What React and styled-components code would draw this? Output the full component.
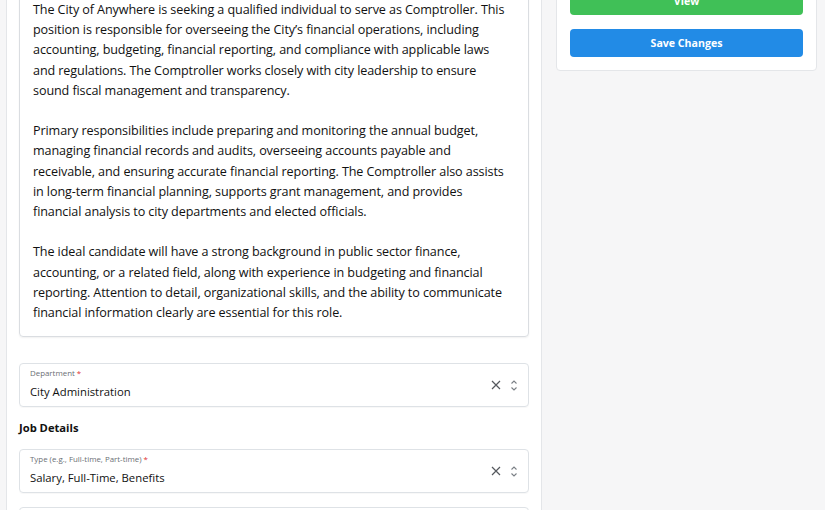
import React from 'react';
import styled, { createGlobalStyle } from 'styled-components';

// --- GLOBAL ---
const GlobalStyle = createGlobalStyle`
  html, body { margin: 0; padding: 0; background: #f6f6f7; overflow: hidden; }
  body { font-family: "Open Sans", "Noto Sans", Arial, sans-serif; color: #111; }
`;

// --- LAYOUT ---
const Page = styled.div`
  display: flex; align-items: flex-start; gap: 14px;
  padding: 0 6px;
  margin-top: -29px; /* page is scrolled down */
`;
const MainCard = styled.section`
  width: 536px; box-sizing: border-box;
  background: #fff; border: 1px solid #e4e6e9; border-radius: 4px;
  padding: 13px 12px 40px; display: flex; flex-direction: column;
`;
const SideCard = styled.aside`
  width: 261px; box-sizing: border-box;
  background: #fff; border: 1px solid #e4e6e9; border-radius: 4px;
  padding: 15px 13px 13px; display: flex; flex-direction: column; gap: 14px;
`;

// --- DESCRIPTION ---
const TextBox = styled.div`
  border: 1px solid #dadde1; border-radius: 4px;
  padding: 14px 13px 13px;
  box-shadow: 0 1px 2px rgba(0,0,0,0.06);
  font-size: 12.6px; letter-spacing: -0.1px; line-height: 20.2px; color: #111;
  white-space: pre;
`;

// --- SELECT FIELD ---
const Field = styled.div`
  height: 44px; box-sizing: border-box; margin-top: ${p => p.$gap || 0}px;
  border: 1px solid #dee2e6; border-radius: 4px;
  padding: 4px 10px 0 10px;
  display: flex; align-items: flex-start;
  box-shadow: 0 1px 1px rgba(0,0,0,0.03);
`;
const FieldText = styled.div`
  flex: 1; display: flex; flex-direction: column;
`;
const FieldLabel = styled.span`
  font-size: 7.9px; line-height: 11px; color: #6b6f75;
  & b { color: #e03131; font-weight: 400; }
`;
const FieldValue = styled.span`
  font-size: 11.3px; line-height: 18px; margin-top: 4px; color: #111;
`;
const FieldIcons = styled.div`
  display: flex; align-items: center; gap: 9px;
  align-self: center; margin-top: -4px;
`;
const SectionTitle = styled.h3`
  margin: 12px 0 0; font-size: 11.2px; line-height: 18px; font-weight: 700; color: #111;
`;

// --- BUTTONS ---
const Button = styled.button`
  height: 28px; border: none; border-radius: 4px;
  background: ${p => p.$color};
  color: #fff; font-family: inherit; font-size: 10.6px; font-weight: 700;
  cursor: pointer;
`;

const ClearIcon = () => (
  <svg width="10" height="10" viewBox="0 0 10 10">
    <path d="M1 1L9 9M9 1L1 9" stroke="#55595e" strokeWidth="1.2" fill="none" />
  </svg>
);
const ChevronIcon = () => (
  <svg width="8" height="13" viewBox="0 0 8 13">
    <path d="M1.5 4.5L4 2L6.5 4.5M1.5 8.5L4 11L6.5 8.5" stroke="#7a7f85" strokeWidth="1.1" fill="none" />
  </svg>
);

const description = [
  'The City of Anywhere is seeking a qualified individual to serve as Comptroller. This',
  'position is responsible for overseeing the City\u2019s financial operations, including',
  'accounting, budgeting, financial reporting, and compliance with applicable laws',
  'and regulations. The Comptroller works closely with city leadership to ensure',
  'sound fiscal management and transparency.',
  '',
  'Primary responsibilities include preparing and monitoring the annual budget,',
  'managing financial records and audits, overseeing accounts payable and',
  'receivable, and ensuring accurate financial reporting. The Comptroller also assists',
  'in long-term financial planning, supports grant management, and provides',
  'financial analysis to city departments and elected officials.',
  '',
  'The ideal candidate will have a strong background in public sector finance,',
  'accounting, or a related field, along with experience in budgeting and financial',
  'reporting. Attention to detail, organizational skills, and the ability to communicate',
  'financial information clearly are essential for this role.',
].join('\n');

const SelectField = ({ label, value, gap }) => (
  <Field $gap={gap}>
    <FieldText>
      <FieldLabel>{label} <b>*</b></FieldLabel>
      <FieldValue>{value}</FieldValue>
    </FieldText>
    <FieldIcons>
      <ClearIcon />
      <ChevronIcon />
    </FieldIcons>
  </Field>
);

const EmptyField = styled(Field)``;

export default function App() {
  return (
    <>
      <GlobalStyle />
      <Page>
        <MainCard>
          <TextBox>{description}</TextBox>
          <SelectField gap={26} label="Department" value="City Administration" />
          <SectionTitle>Job Details</SectionTitle>
          <SelectField gap={12} label="Type (e.g., Full-time, Part-time)" value="Salary, Full-Time, Benefits" />
          <EmptyField $gap={14} />
        </MainCard>
        <SideCard>
          <Button $color="#40c057">View</Button>
          <Button $color="#228be6">Save Changes</Button>
        </SideCard>
      </Page>
    </>
  );
}
